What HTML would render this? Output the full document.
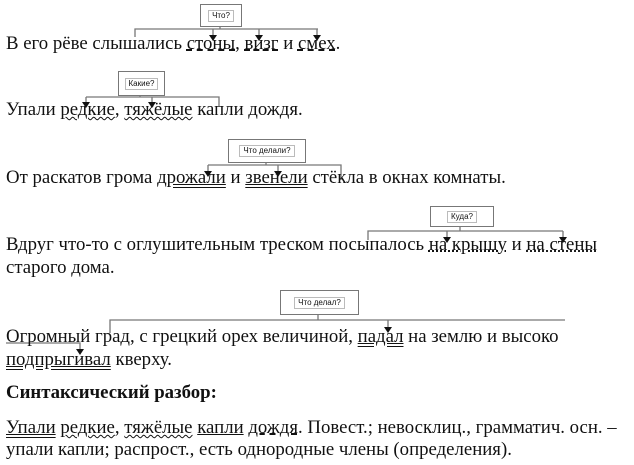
<!DOCTYPE html>
<html><head><meta charset="utf-8"><style>
body{margin:0;width:634px;height:465px;background:#fff;position:relative;overflow:hidden;font-family:"Liberation Serif","DejaVu Serif",serif;font-size:18.8px;color:#111}
.l{position:absolute;left:6px;white-space:nowrap;line-height:20px}
.d{text-decoration:underline double}
.s{text-decoration:underline}
.da{text-decoration:underline dashed}
.w{text-decoration:underline wavy;text-decoration-thickness:1px}
.dd{text-decoration:underline dotted}
.box{position:absolute;border:1px solid #777;background:#fff;font-family:"Liberation Sans",sans-serif;font-size:8px;display:flex;align-items:center;justify-content:center}
.box span{border:1px solid #bbb;padding:0 3px;line-height:10px}
b{font-weight:bold}
svg{position:absolute;left:0;top:0}
</style></head><body>
<svg width="634" height="465">
<g stroke="#777" stroke-width="1.3" fill="none">
<path d="M220 25V29M135 37V29H318M213 29V35M259 29V35M317 29V35"/>
<path d="M140 94V97M86 97H219V106M86 97V102M152 97V102"/>
<path d="M266 161V165M208 165H341V180M208 165V171M278 165V171"/>
<path d="M460 224V231M368 240V231H563M447 231V237M563 231V237"/>
<path d="M318 313V320M110 333V320H565M388 320V327M6 343H80V349"/>
</g>
<g fill="#111">
<path d="M209 35h8l-4 6z M255 35h8l-4 6z M313 35h8l-4 6z"/>
<path d="M82 102h8l-4 6z M148 102h8l-4 6z"/>
<path d="M204 171h8l-4 6z M274 171h8l-4 6z"/>
<path d="M443 237h8l-4 6z M559 237h8l-4 6z"/>
<path d="M384 327h8l-4 6z M76 349h8l-4 6z"/>
</g>
</svg>
<div class="box" style="left:200px;top:4px;width:40px;height:21px"><span>Что?</span></div>
<div class="box" style="left:118px;top:71px;width:45px;height:23px"><span>Какие?</span></div>
<div class="box" style="left:228px;top:139px;width:76px;height:22px"><span>Что делали?</span></div>
<div class="box" style="left:430px;top:206px;width:62px;height:19px"><span>Куда?</span></div>
<div class="box" style="left:280px;top:290px;width:77px;height:23px"><span>Что делал?</span></div>

<div class="l" style="top:34px">В его рёве слышались <span class="da">стоны</span>, <span class="da">визг</span> и <span class="da">смех</span>.</div>
<div class="l" style="top:100px">Упали <span class="w">редкие</span>, <span class="w">тяжёлые</span> капли дождя.</div>
<div class="l" style="top:168px">От раскатов грома <span class="d">дрожали</span> и <span class="d">звенели</span> стёкла в окнах комнаты.</div>
<div class="l" style="top:235px">Вдруг что-то с оглушительным треском посыпалось <span class="dd">на крышу</span> и <span class="dd">на стены</span></div>
<div class="l" style="top:258px">старого дома.</div>
<div class="l" style="top:327px">Огромный град, с грецкий орех величиной, <span class="d">падал</span> на землю и высоко</div>
<div class="l" style="top:350px"><span class="d">подпрыгивал</span> кверху.</div>
<div class="l" style="top:383px"><b>Синтаксический разбор:</b></div>
<div class="l" style="top:418px"><span class="d">Упали</span> <span class="w">редкие</span>, <span class="w">тяжёлые</span> <span class="s">капли</span> <span class="da">дождя</span>. Повест.; невосклиц., грамматич. осн. –</div>
<div class="l" style="top:440px">упали капли; распрост., есть однородные члены (определения).</div>
</body></html>
